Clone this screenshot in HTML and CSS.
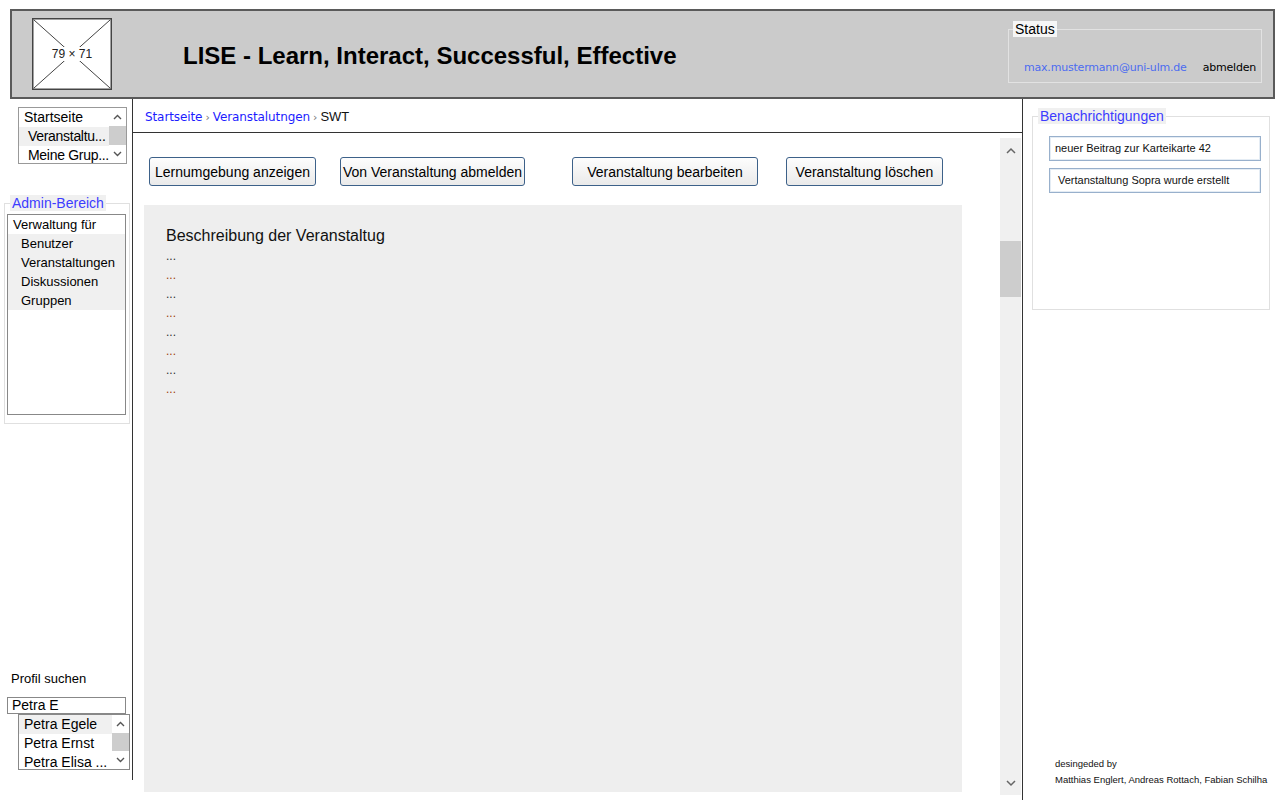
FILE: index.html
```html
<!DOCTYPE html>
<html lang="de">
<head>
<meta charset="utf-8">
<title>LISE</title>
<link rel="stylesheet" href="styles.css">
</head>
<body>
<header class="header">
  <div class="logo">
    <svg class="logo-x" width="80" height="72" viewBox="0 0 80 72">
      <rect x="0.75" y="0.75" width="78.5" height="70.5" fill="#fff" stroke="#444" stroke-width="1.5"/>
      <line x1="2" y1="2" x2="78" y2="70" stroke="#444" stroke-width="1"/>
      <line x1="78" y1="2" x2="2" y2="70" stroke="#444" stroke-width="1"/>
    </svg>
    <span class="logo-label">79 × 71</span>
  </div>
  <h1 class="title">LISE - Learn, Interact, Successful, Effective</h1>
  <fieldset class="status">
    <legend class="status-legend">Status</legend>
    <div class="status-row">
      <a class="email">max.mustermann@uni-ulm.de</a>
      <a class="logout">abmelden</a>
    </div>
  </fieldset>
</header>

<div class="main">
  <aside class="left">
    <div class="listbox nav-box">
      <ul class="items">
        <li class="item">Startseite</li>
        <li class="item sel indent">Veranstaltu...</li>
        <li class="item indent">Meine Grup...</li>
      </ul>
      <div class="mini-scroll">
        <span class="arrow"><svg width="9" height="6" viewBox="0 0 9 6"><polyline points="1,5 4.5,1.5 8,5" fill="none" stroke="#555" stroke-width="1.4"/></svg></span>
        <span class="mini-thumb"></span>
        <span class="arrow"><svg width="9" height="6" viewBox="0 0 9 6"><polyline points="1,1 4.5,4.5 8,1" fill="none" stroke="#555" stroke-width="1.4"/></svg></span>
      </div>
    </div>

    <fieldset class="group admin">
      <legend class="group-legend">Admin-Bereich</legend>
      <ul class="admin-list">
        <li class="admin-item">Verwaltung für</li>
        <li class="admin-item sub">Benutzer</li>
        <li class="admin-item sub">Veranstaltungen</li>
        <li class="admin-item sub">Diskussionen</li>
        <li class="admin-item sub">Gruppen</li>
      </ul>
    </fieldset>

    <div class="profile">
      <div class="profile-label">Profil suchen</div>
      <div class="search-input">Petra E</div>
      <div class="listbox result-box">
        <ul class="items">
          <li class="item sel">Petra Egele</li>
          <li class="item">Petra Ernst</li>
          <li class="item">Petra Elisa ...</li>
        </ul>
        <div class="mini-scroll">
          <span class="arrow"><svg width="9" height="6" viewBox="0 0 9 6"><polyline points="1,5 4.5,1.5 8,5" fill="none" stroke="#555" stroke-width="1.4"/></svg></span>
          <span class="mini-thumb"></span>
          <span class="arrow"><svg width="9" height="6" viewBox="0 0 9 6"><polyline points="1,1 4.5,4.5 8,1" fill="none" stroke="#555" stroke-width="1.4"/></svg></span>
        </div>
      </div>
    </div>
  </aside>

  <section class="center">
    <nav class="crumbs">
      <a class="crumb-link">Startseite</a><span class="sep">›</span><a class="crumb-link">Veranstalutngen</a><span class="sep">›</span><span class="crumb-current">SWT</span>
    </nav>
    <div class="content-row">
      <div class="content">
        <div class="buttons">
          <button class="btn btn-1">Lernumgebung anzeigen</button>
          <button class="btn btn-2">Von Veranstaltung abmelden</button>
          <button class="btn btn-3">Veranstaltung bearbeiten</button>
          <button class="btn btn-4">Veranstaltung löschen</button>
        </div>
        <div class="desc">
          <div class="desc-title">Beschreibung der Veranstaltug</div>
          <div class="dots">...</div>
          <div class="dots alt">...</div>
          <div class="dots">...</div>
          <div class="dots alt">...</div>
          <div class="dots">...</div>
          <div class="dots alt">...</div>
          <div class="dots">...</div>
          <div class="dots alt">...</div>
        </div>
      </div>
      <div class="vscroll">
        <span class="v-arrow"><svg width="10" height="7" viewBox="0 0 10 7"><polyline points="1,6 5,2 9,6" fill="none" stroke="#666" stroke-width="1.5"/></svg></span>
        <span class="v-track-top"></span>
        <span class="v-thumb"></span>
        <span class="v-track-bottom"></span>
        <span class="v-arrow"><svg width="10" height="7" viewBox="0 0 10 7"><polyline points="1,1 5,5 9,1" fill="none" stroke="#666" stroke-width="1.5"/></svg></span>
      </div>
    </div>
  </section>

  <aside class="right">
    <fieldset class="group notes">
      <legend class="group-legend">Benachrichtigungen</legend>
      <div class="note">neuer Beitrag zur Karteikarte 42</div>
      <div class="note note-2">Vertanstaltung Sopra wurde erstellt</div>
    </fieldset>
    <footer class="credits">
      <div class="credit-line">desingeded by</div>
      <div class="credit-line">Matthias Englert, Andreas Rottach, Fabian Schilha</div>
    </footer>
  </aside>
</div>
</body>
</html>
```

FILE: styles.css
```css
* { box-sizing: border-box; }

html, body {
  margin: 0;
  padding: 0;
  background: #fff;
  font-family: "Liberation Sans", Arial, sans-serif;
  color: #000;
}

body { width: 1280px; height: 800px; overflow: hidden; }

ul { list-style: none; margin: 0; padding: 0; }

/* ---------- header ---------- */
.header {
  margin: 9px 0 0 10px;
  width: 1265px;
  height: 90px;
  border: 2px solid #5a5a5a;
  background: #cbcbcb;
  display: flex;
  align-items: flex-start;
}

.logo {
  display: grid;
  margin: 7px 0 0 20px;
  width: 80px;
  height: 72px;
}
.logo-x, .logo-label { grid-area: 1 / 1; }
.logo-label {
  place-self: center;
  font-size: 12px;
  line-height: 14px;
  background: #fff;
  padding: 0 1px;
  color: #222;
}

.title {
  margin: 31px 0 0 71px;
  font-size: 24px;
  line-height: 28px;
  font-weight: bold;
  white-space: nowrap;
}

.status {
  margin: 10px 11px 0 auto;
  width: 254px;
  height: 62px;
  padding: 0;
  border: 1px solid #e2e2e2;
}
.status-legend {
  padding: 0 2px;
  margin-left: 4px;
  font-size: 14px;
  line-height: 16px;
  background: #f6f6f6;
}
.status-row {
  display: flex;
  align-items: center;
  margin-top: 24px;
  padding-left: 15px;
  font-family: "Comic Sans MS", "DejaVu Sans", sans-serif;
  font-size: 11px;
  line-height: 14px;
}
.email { color: #4b6cf0; letter-spacing: -0.2px; }
.logout { color: #000; margin-left: 16px; letter-spacing: -0.2px; }

/* ---------- main ---------- */
.main {
  display: flex;
  height: 701px;
}

.left {
  width: 133px;
  height: 681px;
  border-right: 1px solid #333;
  display: flex;
  flex-direction: column;
}

.listbox {
  display: flex;
  border: 1px solid #999;
  background: #fff;
}
.items { flex: 1; min-width: 0; }
.item {
  font-size: 14px;
  line-height: 19px;
  height: 19px;
  padding-left: 5px;
  white-space: nowrap;
  overflow: hidden;
}
.item.indent { padding-left: 9px; letter-spacing: -0.3px; }
.item.sel { background: #f0f0f0; }

.mini-scroll {
  width: 17px;
  display: flex;
  flex-direction: column;
}
.arrow {
  height: 18px;
  display: flex;
  align-items: center;
  justify-content: center;
}
.mini-thumb {
  flex: 1;
  background: #cdcdcd;
}

.nav-box {
  margin: 8px 0 0 18px;
  width: 109px;
  height: 57px;
}

.group {
  border: 1px solid #e0e0e0;
  margin: 0;
  min-width: 0;
}
.group-legend {
  padding: 0 2px;
  font-size: 14px;
  line-height: 16px;
  color: #3c3cff;
  background: #f0f0f0;
}

.admin {
  margin: 31px 0 0 4px;
  width: 126px;
  padding: 3px 4px 8px 2px;
}
.admin .group-legend { margin-left: 3px; }

.admin-list {
  border: 1px solid #888;
  height: 201px;
  width: 119px;
}
.admin-item {
  font-size: 13px;
  line-height: 19px;
  height: 19px;
  padding-left: 5px;
}
.admin-item.sub {
  background: #f0f0f0;
  padding-left: 13px;
}

.profile {
  margin-top: auto;
  padding-bottom: 10px;
}
.profile-label {
  font-size: 13px;
  line-height: 18px;
  margin-left: 11px;
  margin-bottom: 9px;
}
.search-input {
  margin-left: 7px;
  width: 119px;
  height: 17px;
  border: 1px solid #888;
  font-size: 14px;
  line-height: 15px;
  padding-left: 4px;
}
.result-box {
  margin-left: 18px;
  width: 112px;
  height: 56px;
  border-color: #888;
}

/* ---------- center ---------- */
.center {
  width: 889px;
  display: flex;
  flex-direction: column;
}

.crumbs {
  height: 34px;
  border-bottom: 1px solid #333;
  padding: 10px 0 0 12px;
  font-family: "Comic Sans MS", "DejaVu Sans", sans-serif;
  font-size: 12px;
  line-height: 16px;
  white-space: nowrap;
}
.crumb-link { color: #1c1cff; letter-spacing: -0.1px; }
.sep { color: #777; margin: 0 3px; font-size: 11px; }
.crumb-current {
  font-family: "Liberation Sans", Arial, sans-serif;
  font-size: 13px;
  color: #111;
}

.content-row {
  display: flex;
  flex: 1;
}
.content {
  width: 867px;
}

.buttons {
  display: flex;
  padding: 24px 0 0 16px;
}
.btn {
  height: 29px;
  border: 1px solid #3d6189;
  border-radius: 3px;
  background: linear-gradient(#fdfdfd, #eaeaea);
  font-family: "Liberation Sans", Arial, sans-serif;
  font-size: 14px;
  color: #000;
  padding: 0;
  text-align: center;
  white-space: nowrap;
}
.btn-1 { width: 167px; }
.btn-2 { width: 185px; margin-left: 24px; }
.btn-3 { width: 186px; margin-left: 47px; }
.btn-4 { width: 157px; margin-left: 28px; }

.desc {
  margin: 19px 0 0 11px;
  width: 818px;
  height: 587px;
  background: #eeeeee;
  padding: 21px 0 0 22px;
}
.desc-title {
  font-size: 16px;
  line-height: 20px;
  margin-bottom: 1px;
  color: #111;
}
.dots {
  font-size: 12px;
  line-height: 19px;
  height: 19px;
  color: #333;
}
.dots.alt { color: #a0400c; }

.vscroll {
  margin-top: 5px;
  width: 21px;
  height: 657px;
  background: #f0f0f0;
  display: flex;
  flex-direction: column;
}
.v-arrow {
  height: 24px;
  display: flex;
  align-items: center;
  justify-content: center;
}
.v-track-top { height: 79px; }
.v-thumb { height: 56px; background: #cdcdcd; }
.v-track-bottom { flex: 1; }

/* ---------- right ---------- */
.right {
  width: 258px;
  border-left: 1px solid #333;
  display: flex;
  flex-direction: column;
}

.notes {
  margin: 9px 0 0 9px;
  width: 238px;
  height: 202px;
  padding: 12px 0 0 0;
}
.notes .group-legend { margin-left: 5px; }

.note {
  margin-left: 16px;
  width: 212px;
  height: 25px;
  border: 1px solid #98b0cc;
  box-shadow: inset 0 0 0 1px #e4ecf4;
  font-size: 11px;
  line-height: 23px;
  padding-left: 5px;
  color: #111;
  white-space: nowrap;
}
.note-2 { margin-top: 7px; padding-left: 8px; }

.credits {
  margin-top: auto;
  padding: 0 0 12px 32px;
  font-size: 9.5px;
  color: #111;
}
.credit-line { line-height: 16px; }
```
